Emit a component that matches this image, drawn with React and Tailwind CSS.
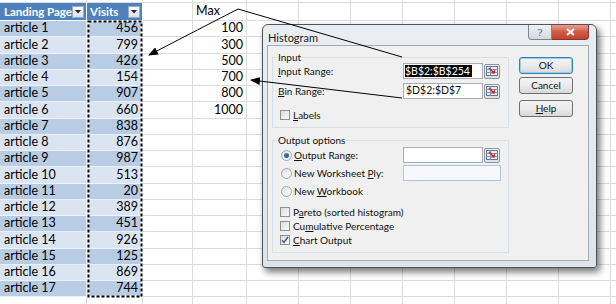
import React from 'react';

const visits = [456, 799, 426, 154, 907, 660, 838, 876, 987, 513, 20, 389, 451, 926, 125, 869, 744];
const maxes = ['100', '300', '500', '700', '800', '1000'];
const restCols = ['w-[52px]', 'w-[52px]', 'w-[52px]', 'w-[52px]', 'w-[52px]', 'w-[52px]', 'w-[52px]', 'w-[52px]'];

function FilterBtn() {
  return (
    <div className="w-[12px] h-[12px] border border-[#9aabc2] bg-gradient-to-b from-[#fbfcfd] to-[#d9e0e8] flex items-center justify-center shrink-0">
      <svg width="6" height="4" viewBox="0 0 6 4">
        <path d="M0 0H6L3 3.5Z" fill="#1d2634" />
      </svg>
    </div>
  );
}

function Row({ h, kind, a, b, d, dLeft }) {
  const tbl =
    kind === 'head'
      ? 'bg-[#4f81bd] text-white font-bold border-white text-[11.5px]'
      : kind === 'odd'
      ? 'bg-[#b8cce4] border-[#e9eff7]'
      : kind === 'even'
      ? 'bg-[#dbe5f1] border-[#eef3f9]'
      : 'bg-white border-[#dadcdd]';
  return (
    <div className={`flex ${h}`}>
      <div className={`w-[87px] shrink-0 border-r border-b ${tbl} flex items-center justify-between pl-[4px] pr-[2px] overflow-hidden whitespace-nowrap`}>
        <span>{a}</span>
        {kind === 'head' && <FilterBtn />}
      </div>
      <div className={`w-[56px] shrink-0 border-r border-b ${tbl} flex items-center overflow-hidden whitespace-nowrap ${kind === 'head' ? 'justify-between pl-[3px] pr-[2px]' : 'justify-end pr-[4px]'}`}>
        <span>{b}</span>
        {kind === 'head' && <FilterBtn />}
      </div>
      <div className="w-[50px] shrink-0 border-r border-b border-[#dadcdd]" />
      <div className={`w-[54px] shrink-0 border-r border-b border-[#dadcdd] flex items-center overflow-hidden whitespace-nowrap ${dLeft ? 'justify-start pl-[3px]' : 'justify-end pr-[3px]'}`}>
        <span>{d}</span>
      </div>
      {restCols.map((c, i) => (
        <div key={i} className={`${c} shrink-0 border-r border-b border-[#dadcdd]`} />
      ))}
    </div>
  );
}

function RefBtn() {
  return (
    <div className="w-[16px] h-[15px] ml-[1px] rounded-[2px] border border-[#8d949c] bg-gradient-to-b from-[#f6f7f8] to-[#dcdfe3] flex items-center justify-center shrink-0">
      <svg width="12" height="10" viewBox="0 0 12 10">
        <rect x="0.5" y="0.5" width="11" height="9" fill="#e8eef7" stroke="#5b78a6" />
        <path d="M0.5 3.5H11.5M0.5 6.5H11.5M4.5 0.5V9.5" stroke="#7d95bb" strokeWidth="1" />
        <path d="M3 2L8 7" stroke="#d42a1a" strokeWidth="1.6" />
        <path d="M5 7.5H9V3.5Z" fill="#d42a1a" />
      </svg>
    </div>
  );
}

function Check({ checked }) {
  return (
    <div className="w-[10px] h-[10px] border border-[#8e8f8f] bg-gradient-to-br from-[#dcdcdc] to-[#fbfbfb] flex items-center justify-center shrink-0">
      {checked && (
        <svg width="8" height="8" viewBox="0 0 8 8">
          <path d="M1 4.2L3 6.5L7 1" fill="none" stroke="#3d4f8c" strokeWidth="1.3" />
        </svg>
      )}
    </div>
  );
}

function Radio({ on }) {
  return (
    <div className="w-[11px] h-[11px] rounded-full border border-[#a3a6aa] bg-gradient-to-br from-[#dfe0e2] to-[#fdfdfd] flex items-center justify-center shrink-0">
      {on && <div className="w-[5px] h-[5px] rounded-full bg-gradient-to-br from-[#3a8ad6] to-[#1a4f8f]" />}
    </div>
  );
}

function Btn({ children, focused, className = '' }) {
  return (
    <div
      className={`w-[54px] h-[17px] rounded-[3px] border flex items-center justify-center bg-gradient-to-b from-[#f3f3f3] via-[#ebebeb] to-[#d8d8d8] ${
        focused ? 'border-[#3c7fb1] shadow-[inset_0_0_0_1px_#8fd0f5]' : 'border-[#707070]'
      } ${className}`}
    >
      {children}
    </div>
  );
}

function Dialog() {
  return (
    <div className="absolute left-[262px] top-[24px] w-[335px] h-[244px] rounded-t-[6px] rounded-b-[3px] border border-[#4d5358] bg-gradient-to-b from-[#eaeef2] to-[#dfe4ea] shadow-[3px_4px_7px_rgba(0,0,0,0.55)] flex flex-col font-['Lato'] text-[10px] text-[#111]">
      <div className="h-[20px] flex items-start justify-between pl-[5px] pr-[7px] shrink-0">
        <span className="mt-[6px] text-[11px] leading-[13px] text-[#1b1b1b]">Histogram</span>
        <div className="flex">
          <div className="w-[24px] h-[15px] rounded-bl-[4px] border border-t-0 border-[#7d848c] bg-gradient-to-b from-[#f1f3f5] to-[#d3d8de] flex items-center justify-center text-[10px] text-[#5b6168] font-['DejaVu_Serif']">
            ?
          </div>
          <div className="w-[37px] h-[15px] rounded-br-[4px] border border-t-0 border-l-0 border-[#7b3a30] bg-gradient-to-b from-[#e7a08f] via-[#d05b44] to-[#c2412b] flex items-center justify-center">
            <svg width="9" height="8" viewBox="0 0 9 8">
              <path d="M1 1L8 7M8 1L1 7" stroke="#fff" strokeWidth="2" />
            </svg>
          </div>
        </div>
      </div>
      <div className="ml-[4px] mr-[7px] mb-[6px] flex-1 border border-[#a3abb4] bg-[#f0f0f0] flex">
        <div className="ml-[4px] mt-[11px] w-[237px] flex flex-col">
          <div className="h-[71px] border border-[#d5dfe5] flex flex-col">
            <span className="-mt-[7px] ml-[4px] px-[1px] w-fit h-[13px] leading-[13px] bg-[#f0f0f0]">Input</span>
            <div className="-mt-[1px] h-[16px] flex items-center">
              <span className="w-[130px] pl-[5px]">
                <u>I</u>nput Range:
              </span>
              <div className="w-[80px] h-[16px] border border-[#abadb3] bg-white flex items-center pl-[1px] overflow-hidden text-[10.5px]">
                <span className="bg-black text-white leading-[12px] pr-[2px]">$B$2:$B$254</span>
              </div>
              <RefBtn />
            </div>
            <div className="mt-[4px] h-[16px] flex items-center">
              <span className="w-[130px] pl-[5px]">
                <u>B</u>in Range:
              </span>
              <div className="w-[80px] h-[16px] border border-[#abadb3] bg-white flex items-center pl-[2px] overflow-hidden text-[10.5px]">
                <span>$D$2:$D$7</span>
              </div>
              <RefBtn />
            </div>
            <div className="mt-[8px] h-[16px] flex items-center pl-[7px] gap-[3px]">
              <Check />
              <span>
                <u>L</u>abels
              </span>
            </div>
          </div>
          <div className="mt-[12px] h-[113px] border border-[#d5dfe5] flex flex-col">
            <span className="-mt-[7px] ml-[4px] px-[1px] w-fit h-[13px] leading-[13px] bg-[#f0f0f0]">Output options</span>
            <div className="h-[16px] flex items-center">
              <span className="w-[130px] pl-[8px] flex items-center gap-[2px]">
                <Radio on />
                <span>
                  <u>O</u>utput Range:
                </span>
              </span>
              <div className="w-[80px] h-[16px] border border-[#abadb3] bg-white" />
              <RefBtn />
            </div>
            <div className="mt-[2px] h-[16px] flex items-center">
              <span className="w-[130px] pl-[8px] flex items-center gap-[2px]">
                <Radio />
                <span>
                  New Worksheet <u>P</u>ly:
                </span>
              </span>
              <div className="w-[98px] h-[16px] border border-[#a9c6e4] bg-[#f6f8fb]" />
            </div>
            <div className="mt-[2px] h-[16px] flex items-center pl-[8px] gap-[2px]">
              <Radio />
              <span>
                New <u>W</u>orkbook
              </span>
            </div>
            <div className="mt-[6px] h-[14px] flex items-center pl-[7px] gap-[3px]">
              <Check />
              <span>
                P<u>a</u>reto (sorted histogram)
              </span>
            </div>
            <div className="h-[14px] flex items-center pl-[7px] gap-[3px]">
              <Check />
              <span>
                Cu<u>m</u>ulative Percentage
              </span>
            </div>
            <div className="h-[14px] flex items-center pl-[7px] gap-[3px]">
              <Check checked />
              <span>
                <u>C</u>hart Output
              </span>
            </div>
          </div>
        </div>
        <div className="ml-[10px] mt-[11px] flex flex-col">
          <Btn focused>OK</Btn>
          <Btn className="mt-[3px]">Cancel</Btn>
          <Btn className="mt-[6px]">
            <span>
              <u>H</u>elp
            </span>
          </Btn>
        </div>
      </div>
    </div>
  );
}

export default function App() {
  return (
    <div className="relative w-[616px] h-[304px] overflow-hidden bg-white font-['Lato'] text-[12.5px] text-black">
      <div className="flex flex-col">
        <Row h="h-[3px]" kind="blank" />
        <Row h="h-[18px]" kind="head" a="Landing Page" b="Visits" d="Max" dLeft />
        {visits.map((v, i) => (
          <Row
            key={i}
            h="h-[16.25px]"
            kind={i % 2 === 0 ? 'odd' : 'even'}
            a={`article ${i + 1}`}
            b={v}
            d={maxes[i]}
          />
        ))}
        <Row h="h-[16px]" kind="blank" />
      </div>

      <svg className="absolute left-0 top-0 pointer-events-none" width="616" height="304" viewBox="0 0 616 304">
        <rect x="88.5" y="21.5" width="53" height="275" fill="none" stroke="#fff" strokeWidth="2" />
        <rect x="88.5" y="21.5" width="53" height="275" fill="none" stroke="#000" strokeWidth="2" strokeDasharray="3 2" />
      </svg>

      <Dialog />

      <svg className="absolute left-0 top-0 pointer-events-none" width="616" height="304" viewBox="0 0 616 304">
        <defs>
          <marker id="ah" markerWidth="10" markerHeight="8" refX="9" refY="4" orient="auto" markerUnits="userSpaceOnUse">
            <path d="M0 0L10 4L0 8Z" fill="#000" />
          </marker>
        </defs>
        <path d="M238 9L149 55" stroke="#000" strokeWidth="1" fill="none" markerEnd="url(#ah)" />
        <path d="M238 9L402 57" stroke="#000" strokeWidth="1" fill="none" />
        <path d="M402 98L251 80" stroke="#000" strokeWidth="1" fill="none" markerEnd="url(#ah)" />
      </svg>
    </div>
  );
}
